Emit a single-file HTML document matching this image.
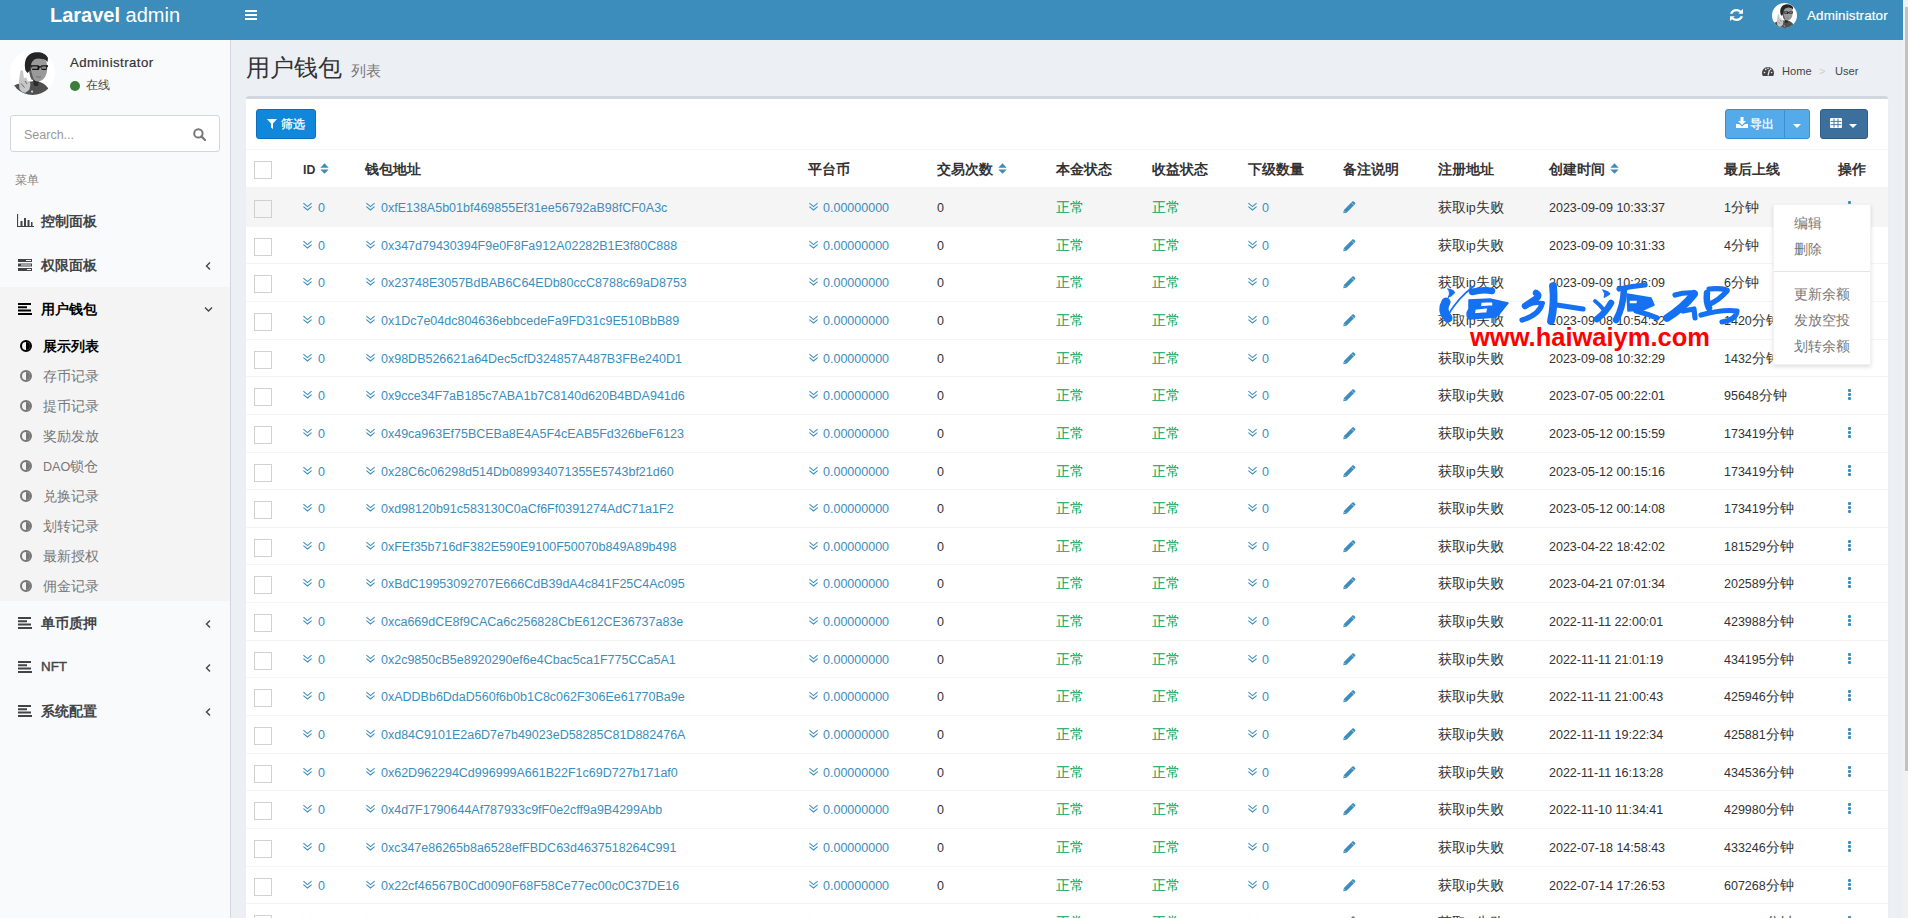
<!DOCTYPE html>
<html><head><meta charset="utf-8">
<style>
*{box-sizing:border-box;margin:0;padding:0}
html,body{width:1908px;height:918px;overflow:hidden;background:#ecf0f5;font-family:"Liberation Sans",sans-serif;color:#333}
.a{position:absolute;white-space:nowrap}
#hdr{position:absolute;left:0;top:0;width:1903px;height:40px;background:#3c8dbc}
#logo{position:absolute;left:50px;top:3px;color:#fff;font-size:20px;line-height:24px;white-space:nowrap}
#burger{position:absolute;left:245px;top:10px;width:12px;height:10px}
#burger i{display:block;height:2px;background:#fff;margin-bottom:2px}
#side{position:absolute;left:0;top:40px;width:230px;height:878px;background:#f9fafc}
#sideb{position:absolute;left:230px;top:40px;width:1px;height:878px;background:#d2d6de}
#sb{position:absolute;left:1903px;top:0;width:5px;height:918px;background:#f1f1f1}
#sbt{position:absolute;left:1905px;top:7px;width:3px;height:764px;background:#c1c1c1}
.zh{font-size:14px;line-height:14px}
#box{position:absolute;left:246px;top:96px;width:1642px;height:822px;background:#fff;border-top:3px solid #d2d6de;border-radius:3px 3px 0 0;box-shadow:0 1px 1px rgba(0,0,0,.1)}
.row{position:absolute;left:0;width:1642px;height:37.67px;border-top:1px solid #f4f4f4}
#rows .row:first-child,#rows .row:nth-child(2){border-top-color:transparent}
.row.hov{background:#f5f5f5}
.c{position:absolute;top:0;height:37px;line-height:38px;font-size:12.5px;white-space:nowrap;color:#333}
.lk{color:#3c8dbc}
.lk .chv{position:relative;top:-2px;margin-right:5px;vertical-align:middle}
.gr{color:#00a65a;font-size:14px;line-height:37px}
.cb{position:absolute;top:11px;width:18px;height:18px;border:1px solid #d0d0d0;background:#fff}
#rows .row:first-child .cb{background:#f5f5f5}
.pen{vertical-align:middle;position:relative;top:-1px}
.dots{top:12px;width:4px;height:12px}
.dots i{display:block;width:3px;height:3px;background:#3c8dbc;margin-bottom:1px;border-radius:1px}
.th{position:absolute;top:150px;height:38px;line-height:38px;font-size:14px;font-weight:bold;color:#333;white-space:nowrap}
.sort{display:inline-block;vertical-align:middle;position:relative;top:-2px;margin-left:5px}
/* sidebar */
.mi{position:absolute;left:18px;height:20px;line-height:20px;font-size:14px;font-weight:bold;color:#444;white-space:nowrap}
.mi .ic{position:absolute;left:0;top:4px}
.mi .tx{position:absolute;left:23px;top:0}
.arr{position:absolute;left:204px;width:8px;height:10px}
.sub{position:absolute;left:20px;height:20px;line-height:20px;font-size:14px;color:#777;white-space:nowrap}
.sub .hc{position:absolute;left:0;top:4px;width:12px;height:12px;border-radius:50%;border:2px solid #777;overflow:hidden}
.sub .hc:after{content:"";position:absolute;left:4px;top:0;width:6px;height:10px;background:#777}
.sub .tx{position:absolute;left:23px;top:0}
.sub.act{color:#000;font-weight:bold}
.sub.act .hc{border-color:#000}
.sub.act .hc:after{background:#000}
.btn{position:absolute;border-radius:3px;color:#fff;font-size:12px;white-space:nowrap}
#menu{position:absolute;left:1773px;top:204px;width:98px;height:161px;background:#fff;border:1px solid rgba(0,0,0,.05);box-shadow:0 2px 4px rgba(0,0,0,.13)}
#menu .it{position:absolute;left:19px;font-size:14px;line-height:16px;color:#777;white-space:nowrap}
#menu .dv{position:absolute;left:0;top:66px;width:96px;height:1px;background:#e5e5e5}
</style></head><body>
<div id="hdr">
 <div id="logo"><b>Laravel</b> admin</div>
 <div id="burger"><i></i><i></i><i></i></div>
 <svg class="a" style="left:1730px;top:9px" width="13" height="12" viewBox="0 0 13 12"><path d="M0 4.8C0.8 1.8 3.4 0 6.5 0C8.3 0 9.8 0.6 10.9 1.7L13 0V4.8H8.2L9.7 3.5C8.9 2.7 7.8 2.3 6.5 2.3C4.6 2.3 3 3.3 2.5 4.8Z" fill="#fff"/><path d="M13 7.2C12.2 10.2 9.6 12 6.5 12C4.7 12 3.2 11.4 2.1 10.3L0 12V7.2H4.8L3.3 8.5C4.1 9.3 5.2 9.7 6.5 9.7C8.4 9.7 10 8.7 10.5 7.2Z" fill="#fff"/></svg>
 <svg class="a" style="left:1772px;top:3px" width="25" height="25" viewBox="0 0 45 45"><defs><clipPath id="cp25"><circle cx="22.5" cy="22.5" r="22.5"/></clipPath></defs><g clip-path="url(#cp25)"><rect width="45" height="45" fill="#fff"/>
<path d="M3 36c4-2 9-3.5 14-4l8-1 5 1c3 1 6 3 8 6l2 7H3z" fill="#505050"/>
<path d="M22 40.5a1 1 0 1 0 0.1 0z" fill="#ddd"/>
<path d="M23 30h6l-1 6h-4z" fill="#2a2a2a"/>
<path d="M20 13C22 8 32 7 36 11C38 15 37.5 22 35.5 26C33.5 30 30.5 31.5 27.5 31.5C24 31 22 28 21 24Z" fill="#9a9a9a"/>
<path d="M20 15C21 20 22 26 24.5 30.5L21.5 29.5C19 25 18.5 19 20 15Z" fill="#5a5a5a"/>
<path d="M15 18C14 10 17 4 24 2.5C30 1.5 36 3 38 8L37.5 12C35.5 9 31 8.3 27 8.8C24 9.3 22 11 21.2 14L20.5 20L17.5 23C16 21.5 15 20 15 18Z" fill="#262626"/>
<path d="M20.5 15.2h8l1 1h1l1-1h6.5v1.6l-1 0.4-0.6 2.8h-4.6l-1-2.6h-1l-1 2.6h-6.5l-0.8-2.8z" fill="#151515"/>
<path d="M22 16.5h5.5v2.2H22zM31.5 16.5h4.6v2.2h-4.6z" fill="#8e8e8e"/>
<path d="M26 26.5c1.8 0.8 3.6 0.8 5 0" stroke="#6a6a6a" stroke-width="0.8" fill="none"/>
<path d="M10.5 21c1-1.2 2.4-0.6 2.6 0.8l0.9 7c0.6-1.6 2.2-1.8 2.8-0.6l0.6 2.6c2 0.2 3 2 3 4l-1 5-4 3c-3 0-5-2-6-4l-0.5-8z" fill="#c6c6c6"/>
<path d="M11 33.5l3.5 4M15 31l2 3" stroke="#6a6a6a" stroke-width="1"/>
</g></svg>
 <div class="a" style="left:1807px;top:7px;color:#fff;font-size:13.4px;line-height:18px;letter-spacing:0.15px;-webkit-text-stroke:0.2px #fff">Administrator</div>
</div>
<div id="side">
 <svg class="a" style="left:10px;top:10px" width="45" height="45" viewBox="0 0 45 45"><defs><clipPath id="cp45"><circle cx="22.5" cy="22.5" r="22.5"/></clipPath></defs><g clip-path="url(#cp45)"><rect width="45" height="45" fill="#fff"/>
<path d="M3 36c4-2 9-3.5 14-4l8-1 5 1c3 1 6 3 8 6l2 7H3z" fill="#505050"/>
<path d="M22 40.5a1 1 0 1 0 0.1 0z" fill="#ddd"/>
<path d="M23 30h6l-1 6h-4z" fill="#2a2a2a"/>
<path d="M20 13C22 8 32 7 36 11C38 15 37.5 22 35.5 26C33.5 30 30.5 31.5 27.5 31.5C24 31 22 28 21 24Z" fill="#9a9a9a"/>
<path d="M20 15C21 20 22 26 24.5 30.5L21.5 29.5C19 25 18.5 19 20 15Z" fill="#5a5a5a"/>
<path d="M15 18C14 10 17 4 24 2.5C30 1.5 36 3 38 8L37.5 12C35.5 9 31 8.3 27 8.8C24 9.3 22 11 21.2 14L20.5 20L17.5 23C16 21.5 15 20 15 18Z" fill="#262626"/>
<path d="M20.5 15.2h8l1 1h1l1-1h6.5v1.6l-1 0.4-0.6 2.8h-4.6l-1-2.6h-1l-1 2.6h-6.5l-0.8-2.8z" fill="#151515"/>
<path d="M22 16.5h5.5v2.2H22zM31.5 16.5h4.6v2.2h-4.6z" fill="#8e8e8e"/>
<path d="M26 26.5c1.8 0.8 3.6 0.8 5 0" stroke="#6a6a6a" stroke-width="0.8" fill="none"/>
<path d="M10.5 21c1-1.2 2.4-0.6 2.6 0.8l0.9 7c0.6-1.6 2.2-1.8 2.8-0.6l0.6 2.6c2 0.2 3 2 3 4l-1 5-4 3c-3 0-5-2-6-4l-0.5-8z" fill="#c6c6c6"/>
<path d="M11 33.5l3.5 4M15 31l2 3" stroke="#6a6a6a" stroke-width="1"/>
</g></svg>
 <div class="a" style="left:70px;top:15px;font-size:13.2px;line-height:16px;color:#333;letter-spacing:0.45px;-webkit-text-stroke:0.2px #333">Administrator</div>
 <div class="a" style="left:70px;top:41px;width:10px;height:10px;border-radius:50%;background:#3b7d3b"></div>
 <div class="a" style="left:86px;top:37px;font-size:12px;line-height:16px;color:#444">在线</div>
 <div class="a" style="left:10px;top:75px;width:210px;height:37px;background:#fff;border:1px solid #d2d6de;border-radius:3px"></div>
 <div class="a" style="left:24px;top:87px;font-size:12.5px;line-height:16px;color:#999">Search...</div>
 <svg class="a" style="left:193px;top:88px" width="13" height="13" viewBox="0 0 13 13"><circle cx="5.4" cy="5.4" r="4.2" fill="none" stroke="#777" stroke-width="2"/><path d="M8.4 8.4l3.6 3.6" stroke="#777" stroke-width="2.2" stroke-linecap="round"/></svg>
 <div class="a" style="left:15px;top:132px;font-size:12px;line-height:16px;color:#848484">菜单</div>
 <div class="a" style="left:0;top:247px;width:230px;height:314px;background:#f4f4f5"></div>
<div class="mi" style="top:171px"><svg class="ic" width="17" height="13" viewBox="0 0 17 13" style="top:3px;left:-1px"><path d="M0.5 0v12.5H17" fill="none" stroke="#444" stroke-width="1.2"/><path d="M3.5 7h2v5h-2zM7 4h2v8H7zM10.5 6h2v6h-2zM14 8h1.5v4H14z" fill="#444"/></svg><span class="tx">控制面板</span></div>
<div class="mi" style="top:215px"><svg class="ic" width="14" height="12" viewBox="0 0 14 12"><path d="M0 0h14v3H0zM0 4.5h14v3H0zM0 9h14v3H0z" fill="#444"/><path d="M8 1.5h5M3 6h10M9 10.5h4" stroke="#f9fafc" stroke-width="1"/></svg><span class="tx">权限面板</span></div><svg class="a" style="left:204px;top:221px" width="8" height="10" viewBox="0 0 8 10"><path d="M6 1.5L2.5 5 6 8.5" fill="none" stroke="#444" stroke-width="1.4"/></svg>
<div class="mi" style="top:259px;color:#000"><svg class="ic" width="14" height="12" viewBox="0 0 14 12"><path d="M0 1h13M0 4.3h9M0 7.6h13M0 10.9h14" stroke="#000" stroke-width="2"/></svg><span class="tx">用户钱包</span></div><svg class="a" style="left:204px;top:266px" width="9" height="7" viewBox="0 0 9 7"><path d="M1 1.5L4.5 5 8 1.5" fill="none" stroke="#444" stroke-width="1.4"/></svg>
<div class="sub act" style="top:296px"><span class="hc"></span><span class="tx">展示列表</span></div>
<div class="sub" style="top:326px"><span class="hc"></span><span class="tx">存币记录</span></div>
<div class="sub" style="top:356px"><span class="hc"></span><span class="tx">提币记录</span></div>
<div class="sub" style="top:386px"><span class="hc"></span><span class="tx">奖励发放</span></div>
<div class="sub" style="top:416px"><span class="hc"></span><span class="tx"><span style="font-size:12.6px">DAO</span>锁仓</span></div>
<div class="sub" style="top:446px"><span class="hc"></span><span class="tx">兑换记录</span></div>
<div class="sub" style="top:476px"><span class="hc"></span><span class="tx">划转记录</span></div>
<div class="sub" style="top:506px"><span class="hc"></span><span class="tx">最新授权</span></div>
<div class="sub" style="top:536px"><span class="hc"></span><span class="tx">佣金记录</span></div>
<div class="mi" style="top:573px"><svg class="ic" width="14" height="12" viewBox="0 0 14 12"><path d="M0 1h13M0 4.3h9M0 7.6h13M0 10.9h14" stroke="#444" stroke-width="2"/></svg><span class="tx">单币质押</span></div><svg class="a" style="left:204px;top:579px" width="8" height="10" viewBox="0 0 8 10"><path d="M6 1.5L2.5 5 6 8.5" fill="none" stroke="#444" stroke-width="1.4"/></svg>
<div class="mi" style="top:617px"><svg class="ic" width="14" height="12" viewBox="0 0 14 12"><path d="M0 1h13M0 4.3h9M0 7.6h13M0 10.9h14" stroke="#444" stroke-width="2"/></svg><span class="tx" style="font-weight:normal;font-size:13.4px;-webkit-text-stroke:0.4px #444">NFT</span></div><svg class="a" style="left:204px;top:623px" width="8" height="10" viewBox="0 0 8 10"><path d="M6 1.5L2.5 5 6 8.5" fill="none" stroke="#444" stroke-width="1.4"/></svg>
<div class="mi" style="top:661px"><svg class="ic" width="14" height="12" viewBox="0 0 14 12"><path d="M0 1h13M0 4.3h9M0 7.6h13M0 10.9h14" stroke="#444" stroke-width="2"/></svg><span class="tx">系统配置</span></div><svg class="a" style="left:204px;top:667px" width="8" height="10" viewBox="0 0 8 10"><path d="M6 1.5L2.5 5 6 8.5" fill="none" stroke="#444" stroke-width="1.4"/></svg>
</div>
<div id="sideb"></div>
<div class="a" style="left:246px;top:54px;font-size:24px;line-height:28px;color:#333">用户钱包</div>
<div class="a" style="left:351px;top:62px;font-size:15px;line-height:18px;color:#777">列表</div>
<svg class="a" style="left:1762px;top:66px" width="12" height="10" viewBox="0 0 12 10"><path d="M0.8 10A6 6 0 1 1 11.2 10z" fill="#444"/><circle cx="2.5" cy="6.5" r=".8" fill="#ecf0f5"/><circle cx="3.8" cy="3.4" r=".8" fill="#ecf0f5"/><circle cx="6" cy="2.3" r=".8" fill="#ecf0f5"/><circle cx="8.6" cy="3.4" r=".8" fill="#ecf0f5"/><circle cx="9.6" cy="6.5" r=".8" fill="#ecf0f5"/><path d="M6 9.5L7.4 3.8" stroke="#ecf0f5" stroke-width="1.2"/></svg>
<div class="a" style="left:1782px;top:64px;font-size:11.1px;line-height:14px;color:#444">Home</div>
<div class="a" style="left:1819px;top:64px;font-size:11px;line-height:14px;color:#ccc">&gt;</div>
<div class="a" style="left:1835px;top:64px;font-size:11.1px;line-height:14px;color:#444">User</div>
<div id="box"></div>
<div class="a" style="left:246px;top:149px;width:1642px;height:1px;background:#f4f4f4"></div>
<div class="btn" style="left:256px;top:109px;width:60px;height:30px;background:#1187dc;border:1px solid #0a6fbf"></div>
<svg class="a" style="left:267px;top:119px" width="10" height="10" viewBox="0 0 10 10"><path d="M0 0h10L6 4.5V10L4 8.5V4.5z" fill="#fff"/></svg>
<div class="a" style="left:281px;top:115.5px;font-size:12px;line-height:16px;color:#fff;-webkit-text-stroke:0.3px #fff">筛选</div>
<div class="btn" style="left:1725px;top:109px;width:85px;height:30px;background:#55aaea;border:1px solid #3a8fd2"></div>
<div class="a" style="left:1784px;top:110px;width:1px;height:28px;background:#3a8fd2"></div>
<svg class="a" style="left:1736px;top:117px" width="12" height="11" viewBox="0 0 12 11"><path d="M4.5 0h3v4h2.5L6 8 2 4h2.5z" fill="#fff"/><path d="M0 7h3l3 2.5 3-2.5h3v4H0z" fill="#fff"/></svg>
<div class="a" style="left:1749.5px;top:115.5px;font-size:12px;line-height:16px;color:#fff;-webkit-text-stroke:0.3px #fff">导出</div>
<svg class="a" style="left:1793px;top:124px" width="8" height="4" viewBox="0 0 8 4"><path d="M0 0h8L4 4z" fill="#fff"/></svg>
<div class="btn" style="left:1820px;top:109px;width:48px;height:30px;background:#3d6f9c;border:1px solid #305b84"></div>
<svg class="a" style="left:1830px;top:118px" width="12" height="10" viewBox="0 0 12 10"><rect x="0" y="0" width="12" height="10" rx="1" fill="#fff"/><path d="M0.5 3.4h11M0.5 6.6h11M4 0.5v9M8 0.5v9" stroke="#3d6f9c" stroke-width="0.9"/></svg>
<svg class="a" style="left:1849px;top:124px" width="8" height="4" viewBox="0 0 8 4"><path d="M0 0h8L4 4z" fill="#fff"/></svg>
<div class="cb" style="left:254px;top:161px"></div>
<div class="th" style="left:303px"><span style="font-size:12.3px">ID</span><svg class="sort" width="9" height="11" viewBox="0 0 9 11"><path d="M0.3 4.7L4.5 0.3 8.7 4.7z" fill="#3c8dbc"/><path d="M0.3 6.4L4.5 10.8 8.7 6.4z" fill="#3c8dbc"/></svg></div>
<div class="th" style="left:365px">钱包地址</div>
<div class="th" style="left:808px">平台币</div>
<div class="th" style="left:937px">交易次数<svg class="sort" width="9" height="11" viewBox="0 0 9 11"><path d="M0.3 4.7L4.5 0.3 8.7 4.7z" fill="#3c8dbc"/><path d="M0.3 6.4L4.5 10.8 8.7 6.4z" fill="#3c8dbc"/></svg></div>
<div class="th" style="left:1056px">本金状态</div>
<div class="th" style="left:1152px">收益状态</div>
<div class="th" style="left:1248px">下级数量</div>
<div class="th" style="left:1343px">备注说明</div>
<div class="th" style="left:1438px">注册地址</div>
<div class="th" style="left:1549px">创建时间<svg class="sort" width="9" height="11" viewBox="0 0 9 11"><path d="M0.3 4.7L4.5 0.3 8.7 4.7z" fill="#3c8dbc"/><path d="M0.3 6.4L4.5 10.8 8.7 6.4z" fill="#3c8dbc"/></svg></div>
<div class="th" style="left:1724px">最后上线</div>
<div class="th" style="left:1838px">操作</div>
<div class="a" style="left:246px;top:187px;width:1642px;height:39.6px;background:#f5f5f5"></div>
<div id="rows" style="position:absolute;left:246px;top:0">
<div class="row" style="top:188px;height:38px">
<div class="cb" style="left:8px"></div>
<div class="c lk" style="left:57px"><svg class="chv" width="9" height="9" viewBox="0 0 9 9"><path d="M0.4 1.2L4.5 4.6 8.6 1.2M0.4 4.6L4.5 8 8.6 4.6" fill="none" stroke="#3c8dbc" stroke-width="1.05"/></svg><span class="t" style="margin-left:1px">0</span></div>
<div class="c lk" style="left:120px"><svg class="chv" width="9" height="9" viewBox="0 0 9 9"><path d="M0.4 1.2L4.5 4.6 8.6 1.2M0.4 4.6L4.5 8 8.6 4.6" fill="none" stroke="#3c8dbc" stroke-width="1.05"/></svg><span class="t" style="margin-left:1px">0xfE138A5b01bf469855Ef31ee56792aB98fCF0A3c</span></div>
<div class="c lk" style="left:563px"><svg class="chv" width="9" height="9" viewBox="0 0 9 9"><path d="M0.4 1.2L4.5 4.6 8.6 1.2M0.4 4.6L4.5 8 8.6 4.6" fill="none" stroke="#3c8dbc" stroke-width="1.05"/></svg><span class="t">0.00000000</span></div>
<div class="c" style="left:691px">0</div>
<div class="c gr" style="left:810px">正常</div>
<div class="c gr" style="left:906px">正常</div>
<div class="c lk" style="left:1002px"><svg class="chv" width="9" height="9" viewBox="0 0 9 9"><path d="M0.4 1.2L4.5 4.6 8.6 1.2M0.4 4.6L4.5 8 8.6 4.6" fill="none" stroke="#3c8dbc" stroke-width="1.05"/></svg><span class="t">0</span></div>
<div class="c" style="left:1097px"><svg class="pen" width="12.5" height="12.5" viewBox="0 0 13 13"><path d="M0.3 12.7L0.9 9.3L9.7 0.5Q10.5-0.2 11.3 0.5L12.5 1.7Q13.2 2.5 12.5 3.3L3.7 12.1Z" fill="#3c8dbc"/><path d="M8.6 1.6L11.4 4.4M1.2 10.2L2.8 11.8" stroke="#f5f5f5" stroke-width="0.6"/></svg></div>
<div class="c" style="left:1192px"><span class="zh">获取</span>ip<span class="zh">失败</span></div>
<div class="c" style="left:1303px">2023-09-09 10:33:37</div>
<div class="c" style="left:1478px">1<span class="zh">分钟</span></div>
<div class="c dots" style="left:1602px"><i></i><i></i><i></i></div>
</div>
<div class="row" style="top:226px;height:37px">
<div class="cb" style="left:8px"></div>
<div class="c lk" style="left:57px"><svg class="chv" width="9" height="9" viewBox="0 0 9 9"><path d="M0.4 1.2L4.5 4.6 8.6 1.2M0.4 4.6L4.5 8 8.6 4.6" fill="none" stroke="#3c8dbc" stroke-width="1.05"/></svg><span class="t" style="margin-left:1px">0</span></div>
<div class="c lk" style="left:120px"><svg class="chv" width="9" height="9" viewBox="0 0 9 9"><path d="M0.4 1.2L4.5 4.6 8.6 1.2M0.4 4.6L4.5 8 8.6 4.6" fill="none" stroke="#3c8dbc" stroke-width="1.05"/></svg><span class="t" style="margin-left:1px">0x347d79430394F9e0F8Fa912A02282B1E3f80C888</span></div>
<div class="c lk" style="left:563px"><svg class="chv" width="9" height="9" viewBox="0 0 9 9"><path d="M0.4 1.2L4.5 4.6 8.6 1.2M0.4 4.6L4.5 8 8.6 4.6" fill="none" stroke="#3c8dbc" stroke-width="1.05"/></svg><span class="t">0.00000000</span></div>
<div class="c" style="left:691px">0</div>
<div class="c gr" style="left:810px">正常</div>
<div class="c gr" style="left:906px">正常</div>
<div class="c lk" style="left:1002px"><svg class="chv" width="9" height="9" viewBox="0 0 9 9"><path d="M0.4 1.2L4.5 4.6 8.6 1.2M0.4 4.6L4.5 8 8.6 4.6" fill="none" stroke="#3c8dbc" stroke-width="1.05"/></svg><span class="t">0</span></div>
<div class="c" style="left:1097px"><svg class="pen" width="12.5" height="12.5" viewBox="0 0 13 13"><path d="M0.3 12.7L0.9 9.3L9.7 0.5Q10.5-0.2 11.3 0.5L12.5 1.7Q13.2 2.5 12.5 3.3L3.7 12.1Z" fill="#3c8dbc"/><path d="M8.6 1.6L11.4 4.4M1.2 10.2L2.8 11.8" stroke="#f5f5f5" stroke-width="0.6"/></svg></div>
<div class="c" style="left:1192px"><span class="zh">获取</span>ip<span class="zh">失败</span></div>
<div class="c" style="left:1303px">2023-09-09 10:31:33</div>
<div class="c" style="left:1478px">4<span class="zh">分钟</span></div>
<div class="c dots" style="left:1602px"><i></i><i></i><i></i></div>
</div>
<div class="row" style="top:263px;height:38px">
<div class="cb" style="left:8px"></div>
<div class="c lk" style="left:57px"><svg class="chv" width="9" height="9" viewBox="0 0 9 9"><path d="M0.4 1.2L4.5 4.6 8.6 1.2M0.4 4.6L4.5 8 8.6 4.6" fill="none" stroke="#3c8dbc" stroke-width="1.05"/></svg><span class="t" style="margin-left:1px">0</span></div>
<div class="c lk" style="left:120px"><svg class="chv" width="9" height="9" viewBox="0 0 9 9"><path d="M0.4 1.2L4.5 4.6 8.6 1.2M0.4 4.6L4.5 8 8.6 4.6" fill="none" stroke="#3c8dbc" stroke-width="1.05"/></svg><span class="t" style="margin-left:1px">0x23748E3057BdBAB6C64EDb80ccC8788c69aD8753</span></div>
<div class="c lk" style="left:563px"><svg class="chv" width="9" height="9" viewBox="0 0 9 9"><path d="M0.4 1.2L4.5 4.6 8.6 1.2M0.4 4.6L4.5 8 8.6 4.6" fill="none" stroke="#3c8dbc" stroke-width="1.05"/></svg><span class="t">0.00000000</span></div>
<div class="c" style="left:691px">0</div>
<div class="c gr" style="left:810px">正常</div>
<div class="c gr" style="left:906px">正常</div>
<div class="c lk" style="left:1002px"><svg class="chv" width="9" height="9" viewBox="0 0 9 9"><path d="M0.4 1.2L4.5 4.6 8.6 1.2M0.4 4.6L4.5 8 8.6 4.6" fill="none" stroke="#3c8dbc" stroke-width="1.05"/></svg><span class="t">0</span></div>
<div class="c" style="left:1097px"><svg class="pen" width="12.5" height="12.5" viewBox="0 0 13 13"><path d="M0.3 12.7L0.9 9.3L9.7 0.5Q10.5-0.2 11.3 0.5L12.5 1.7Q13.2 2.5 12.5 3.3L3.7 12.1Z" fill="#3c8dbc"/><path d="M8.6 1.6L11.4 4.4M1.2 10.2L2.8 11.8" stroke="#f5f5f5" stroke-width="0.6"/></svg></div>
<div class="c" style="left:1192px"><span class="zh">获取</span>ip<span class="zh">失败</span></div>
<div class="c" style="left:1303px">2023-09-09 10:26:09</div>
<div class="c" style="left:1478px">6<span class="zh">分钟</span></div>
<div class="c dots" style="left:1602px"><i></i><i></i><i></i></div>
</div>
<div class="row" style="top:301px;height:38px">
<div class="cb" style="left:8px"></div>
<div class="c lk" style="left:57px"><svg class="chv" width="9" height="9" viewBox="0 0 9 9"><path d="M0.4 1.2L4.5 4.6 8.6 1.2M0.4 4.6L4.5 8 8.6 4.6" fill="none" stroke="#3c8dbc" stroke-width="1.05"/></svg><span class="t" style="margin-left:1px">0</span></div>
<div class="c lk" style="left:120px"><svg class="chv" width="9" height="9" viewBox="0 0 9 9"><path d="M0.4 1.2L4.5 4.6 8.6 1.2M0.4 4.6L4.5 8 8.6 4.6" fill="none" stroke="#3c8dbc" stroke-width="1.05"/></svg><span class="t" style="margin-left:1px">0x1Dc7e04dc804636ebbcedeFa9FD31c9E510BbB89</span></div>
<div class="c lk" style="left:563px"><svg class="chv" width="9" height="9" viewBox="0 0 9 9"><path d="M0.4 1.2L4.5 4.6 8.6 1.2M0.4 4.6L4.5 8 8.6 4.6" fill="none" stroke="#3c8dbc" stroke-width="1.05"/></svg><span class="t">0.00000000</span></div>
<div class="c" style="left:691px">0</div>
<div class="c gr" style="left:810px">正常</div>
<div class="c gr" style="left:906px">正常</div>
<div class="c lk" style="left:1002px"><svg class="chv" width="9" height="9" viewBox="0 0 9 9"><path d="M0.4 1.2L4.5 4.6 8.6 1.2M0.4 4.6L4.5 8 8.6 4.6" fill="none" stroke="#3c8dbc" stroke-width="1.05"/></svg><span class="t">0</span></div>
<div class="c" style="left:1097px"><svg class="pen" width="12.5" height="12.5" viewBox="0 0 13 13"><path d="M0.3 12.7L0.9 9.3L9.7 0.5Q10.5-0.2 11.3 0.5L12.5 1.7Q13.2 2.5 12.5 3.3L3.7 12.1Z" fill="#3c8dbc"/><path d="M8.6 1.6L11.4 4.4M1.2 10.2L2.8 11.8" stroke="#f5f5f5" stroke-width="0.6"/></svg></div>
<div class="c" style="left:1192px"><span class="zh">获取</span>ip<span class="zh">失败</span></div>
<div class="c" style="left:1303px">2023-09-08 10:54:32</div>
<div class="c" style="left:1478px">1420<span class="zh">分钟</span></div>
<div class="c dots" style="left:1602px"><i></i><i></i><i></i></div>
</div>
<div class="row" style="top:339px;height:37px">
<div class="cb" style="left:8px"></div>
<div class="c lk" style="left:57px"><svg class="chv" width="9" height="9" viewBox="0 0 9 9"><path d="M0.4 1.2L4.5 4.6 8.6 1.2M0.4 4.6L4.5 8 8.6 4.6" fill="none" stroke="#3c8dbc" stroke-width="1.05"/></svg><span class="t" style="margin-left:1px">0</span></div>
<div class="c lk" style="left:120px"><svg class="chv" width="9" height="9" viewBox="0 0 9 9"><path d="M0.4 1.2L4.5 4.6 8.6 1.2M0.4 4.6L4.5 8 8.6 4.6" fill="none" stroke="#3c8dbc" stroke-width="1.05"/></svg><span class="t" style="margin-left:1px">0x98DB526621a64Dec5cfD324857A487B3FBe240D1</span></div>
<div class="c lk" style="left:563px"><svg class="chv" width="9" height="9" viewBox="0 0 9 9"><path d="M0.4 1.2L4.5 4.6 8.6 1.2M0.4 4.6L4.5 8 8.6 4.6" fill="none" stroke="#3c8dbc" stroke-width="1.05"/></svg><span class="t">0.00000000</span></div>
<div class="c" style="left:691px">0</div>
<div class="c gr" style="left:810px">正常</div>
<div class="c gr" style="left:906px">正常</div>
<div class="c lk" style="left:1002px"><svg class="chv" width="9" height="9" viewBox="0 0 9 9"><path d="M0.4 1.2L4.5 4.6 8.6 1.2M0.4 4.6L4.5 8 8.6 4.6" fill="none" stroke="#3c8dbc" stroke-width="1.05"/></svg><span class="t">0</span></div>
<div class="c" style="left:1097px"><svg class="pen" width="12.5" height="12.5" viewBox="0 0 13 13"><path d="M0.3 12.7L0.9 9.3L9.7 0.5Q10.5-0.2 11.3 0.5L12.5 1.7Q13.2 2.5 12.5 3.3L3.7 12.1Z" fill="#3c8dbc"/><path d="M8.6 1.6L11.4 4.4M1.2 10.2L2.8 11.8" stroke="#f5f5f5" stroke-width="0.6"/></svg></div>
<div class="c" style="left:1192px"><span class="zh">获取</span>ip<span class="zh">失败</span></div>
<div class="c" style="left:1303px">2023-09-08 10:32:29</div>
<div class="c" style="left:1478px">1432<span class="zh">分钟</span></div>
<div class="c dots" style="left:1602px"><i></i><i></i><i></i></div>
</div>
<div class="row" style="top:376px;height:38px">
<div class="cb" style="left:8px"></div>
<div class="c lk" style="left:57px"><svg class="chv" width="9" height="9" viewBox="0 0 9 9"><path d="M0.4 1.2L4.5 4.6 8.6 1.2M0.4 4.6L4.5 8 8.6 4.6" fill="none" stroke="#3c8dbc" stroke-width="1.05"/></svg><span class="t" style="margin-left:1px">0</span></div>
<div class="c lk" style="left:120px"><svg class="chv" width="9" height="9" viewBox="0 0 9 9"><path d="M0.4 1.2L4.5 4.6 8.6 1.2M0.4 4.6L4.5 8 8.6 4.6" fill="none" stroke="#3c8dbc" stroke-width="1.05"/></svg><span class="t" style="margin-left:1px">0x9cce34F7aB185c7ABA1b7C8140d620B4BDA941d6</span></div>
<div class="c lk" style="left:563px"><svg class="chv" width="9" height="9" viewBox="0 0 9 9"><path d="M0.4 1.2L4.5 4.6 8.6 1.2M0.4 4.6L4.5 8 8.6 4.6" fill="none" stroke="#3c8dbc" stroke-width="1.05"/></svg><span class="t">0.00000000</span></div>
<div class="c" style="left:691px">0</div>
<div class="c gr" style="left:810px">正常</div>
<div class="c gr" style="left:906px">正常</div>
<div class="c lk" style="left:1002px"><svg class="chv" width="9" height="9" viewBox="0 0 9 9"><path d="M0.4 1.2L4.5 4.6 8.6 1.2M0.4 4.6L4.5 8 8.6 4.6" fill="none" stroke="#3c8dbc" stroke-width="1.05"/></svg><span class="t">0</span></div>
<div class="c" style="left:1097px"><svg class="pen" width="12.5" height="12.5" viewBox="0 0 13 13"><path d="M0.3 12.7L0.9 9.3L9.7 0.5Q10.5-0.2 11.3 0.5L12.5 1.7Q13.2 2.5 12.5 3.3L3.7 12.1Z" fill="#3c8dbc"/><path d="M8.6 1.6L11.4 4.4M1.2 10.2L2.8 11.8" stroke="#f5f5f5" stroke-width="0.6"/></svg></div>
<div class="c" style="left:1192px"><span class="zh">获取</span>ip<span class="zh">失败</span></div>
<div class="c" style="left:1303px">2023-07-05 00:22:01</div>
<div class="c" style="left:1478px">95648<span class="zh">分钟</span></div>
<div class="c dots" style="left:1602px"><i></i><i></i><i></i></div>
</div>
<div class="row" style="top:414px;height:38px">
<div class="cb" style="left:8px"></div>
<div class="c lk" style="left:57px"><svg class="chv" width="9" height="9" viewBox="0 0 9 9"><path d="M0.4 1.2L4.5 4.6 8.6 1.2M0.4 4.6L4.5 8 8.6 4.6" fill="none" stroke="#3c8dbc" stroke-width="1.05"/></svg><span class="t" style="margin-left:1px">0</span></div>
<div class="c lk" style="left:120px"><svg class="chv" width="9" height="9" viewBox="0 0 9 9"><path d="M0.4 1.2L4.5 4.6 8.6 1.2M0.4 4.6L4.5 8 8.6 4.6" fill="none" stroke="#3c8dbc" stroke-width="1.05"/></svg><span class="t" style="margin-left:1px">0x49ca963Ef75BCEBa8E4A5F4cEAB5Fd326beF6123</span></div>
<div class="c lk" style="left:563px"><svg class="chv" width="9" height="9" viewBox="0 0 9 9"><path d="M0.4 1.2L4.5 4.6 8.6 1.2M0.4 4.6L4.5 8 8.6 4.6" fill="none" stroke="#3c8dbc" stroke-width="1.05"/></svg><span class="t">0.00000000</span></div>
<div class="c" style="left:691px">0</div>
<div class="c gr" style="left:810px">正常</div>
<div class="c gr" style="left:906px">正常</div>
<div class="c lk" style="left:1002px"><svg class="chv" width="9" height="9" viewBox="0 0 9 9"><path d="M0.4 1.2L4.5 4.6 8.6 1.2M0.4 4.6L4.5 8 8.6 4.6" fill="none" stroke="#3c8dbc" stroke-width="1.05"/></svg><span class="t">0</span></div>
<div class="c" style="left:1097px"><svg class="pen" width="12.5" height="12.5" viewBox="0 0 13 13"><path d="M0.3 12.7L0.9 9.3L9.7 0.5Q10.5-0.2 11.3 0.5L12.5 1.7Q13.2 2.5 12.5 3.3L3.7 12.1Z" fill="#3c8dbc"/><path d="M8.6 1.6L11.4 4.4M1.2 10.2L2.8 11.8" stroke="#f5f5f5" stroke-width="0.6"/></svg></div>
<div class="c" style="left:1192px"><span class="zh">获取</span>ip<span class="zh">失败</span></div>
<div class="c" style="left:1303px">2023-05-12 00:15:59</div>
<div class="c" style="left:1478px">173419<span class="zh">分钟</span></div>
<div class="c dots" style="left:1602px"><i></i><i></i><i></i></div>
</div>
<div class="row" style="top:452px;height:37px">
<div class="cb" style="left:8px"></div>
<div class="c lk" style="left:57px"><svg class="chv" width="9" height="9" viewBox="0 0 9 9"><path d="M0.4 1.2L4.5 4.6 8.6 1.2M0.4 4.6L4.5 8 8.6 4.6" fill="none" stroke="#3c8dbc" stroke-width="1.05"/></svg><span class="t" style="margin-left:1px">0</span></div>
<div class="c lk" style="left:120px"><svg class="chv" width="9" height="9" viewBox="0 0 9 9"><path d="M0.4 1.2L4.5 4.6 8.6 1.2M0.4 4.6L4.5 8 8.6 4.6" fill="none" stroke="#3c8dbc" stroke-width="1.05"/></svg><span class="t" style="margin-left:1px">0x28C6c06298d514Db089934071355E5743bf21d60</span></div>
<div class="c lk" style="left:563px"><svg class="chv" width="9" height="9" viewBox="0 0 9 9"><path d="M0.4 1.2L4.5 4.6 8.6 1.2M0.4 4.6L4.5 8 8.6 4.6" fill="none" stroke="#3c8dbc" stroke-width="1.05"/></svg><span class="t">0.00000000</span></div>
<div class="c" style="left:691px">0</div>
<div class="c gr" style="left:810px">正常</div>
<div class="c gr" style="left:906px">正常</div>
<div class="c lk" style="left:1002px"><svg class="chv" width="9" height="9" viewBox="0 0 9 9"><path d="M0.4 1.2L4.5 4.6 8.6 1.2M0.4 4.6L4.5 8 8.6 4.6" fill="none" stroke="#3c8dbc" stroke-width="1.05"/></svg><span class="t">0</span></div>
<div class="c" style="left:1097px"><svg class="pen" width="12.5" height="12.5" viewBox="0 0 13 13"><path d="M0.3 12.7L0.9 9.3L9.7 0.5Q10.5-0.2 11.3 0.5L12.5 1.7Q13.2 2.5 12.5 3.3L3.7 12.1Z" fill="#3c8dbc"/><path d="M8.6 1.6L11.4 4.4M1.2 10.2L2.8 11.8" stroke="#f5f5f5" stroke-width="0.6"/></svg></div>
<div class="c" style="left:1192px"><span class="zh">获取</span>ip<span class="zh">失败</span></div>
<div class="c" style="left:1303px">2023-05-12 00:15:16</div>
<div class="c" style="left:1478px">173419<span class="zh">分钟</span></div>
<div class="c dots" style="left:1602px"><i></i><i></i><i></i></div>
</div>
<div class="row" style="top:489px;height:38px">
<div class="cb" style="left:8px"></div>
<div class="c lk" style="left:57px"><svg class="chv" width="9" height="9" viewBox="0 0 9 9"><path d="M0.4 1.2L4.5 4.6 8.6 1.2M0.4 4.6L4.5 8 8.6 4.6" fill="none" stroke="#3c8dbc" stroke-width="1.05"/></svg><span class="t" style="margin-left:1px">0</span></div>
<div class="c lk" style="left:120px"><svg class="chv" width="9" height="9" viewBox="0 0 9 9"><path d="M0.4 1.2L4.5 4.6 8.6 1.2M0.4 4.6L4.5 8 8.6 4.6" fill="none" stroke="#3c8dbc" stroke-width="1.05"/></svg><span class="t" style="margin-left:1px">0xd98120b91c583130C0aCf6Ff0391274AdC71a1F2</span></div>
<div class="c lk" style="left:563px"><svg class="chv" width="9" height="9" viewBox="0 0 9 9"><path d="M0.4 1.2L4.5 4.6 8.6 1.2M0.4 4.6L4.5 8 8.6 4.6" fill="none" stroke="#3c8dbc" stroke-width="1.05"/></svg><span class="t">0.00000000</span></div>
<div class="c" style="left:691px">0</div>
<div class="c gr" style="left:810px">正常</div>
<div class="c gr" style="left:906px">正常</div>
<div class="c lk" style="left:1002px"><svg class="chv" width="9" height="9" viewBox="0 0 9 9"><path d="M0.4 1.2L4.5 4.6 8.6 1.2M0.4 4.6L4.5 8 8.6 4.6" fill="none" stroke="#3c8dbc" stroke-width="1.05"/></svg><span class="t">0</span></div>
<div class="c" style="left:1097px"><svg class="pen" width="12.5" height="12.5" viewBox="0 0 13 13"><path d="M0.3 12.7L0.9 9.3L9.7 0.5Q10.5-0.2 11.3 0.5L12.5 1.7Q13.2 2.5 12.5 3.3L3.7 12.1Z" fill="#3c8dbc"/><path d="M8.6 1.6L11.4 4.4M1.2 10.2L2.8 11.8" stroke="#f5f5f5" stroke-width="0.6"/></svg></div>
<div class="c" style="left:1192px"><span class="zh">获取</span>ip<span class="zh">失败</span></div>
<div class="c" style="left:1303px">2023-05-12 00:14:08</div>
<div class="c" style="left:1478px">173419<span class="zh">分钟</span></div>
<div class="c dots" style="left:1602px"><i></i><i></i><i></i></div>
</div>
<div class="row" style="top:527px;height:37px">
<div class="cb" style="left:8px"></div>
<div class="c lk" style="left:57px"><svg class="chv" width="9" height="9" viewBox="0 0 9 9"><path d="M0.4 1.2L4.5 4.6 8.6 1.2M0.4 4.6L4.5 8 8.6 4.6" fill="none" stroke="#3c8dbc" stroke-width="1.05"/></svg><span class="t" style="margin-left:1px">0</span></div>
<div class="c lk" style="left:120px"><svg class="chv" width="9" height="9" viewBox="0 0 9 9"><path d="M0.4 1.2L4.5 4.6 8.6 1.2M0.4 4.6L4.5 8 8.6 4.6" fill="none" stroke="#3c8dbc" stroke-width="1.05"/></svg><span class="t" style="margin-left:1px">0xFEf35b716dF382E590E9100F50070b849A89b498</span></div>
<div class="c lk" style="left:563px"><svg class="chv" width="9" height="9" viewBox="0 0 9 9"><path d="M0.4 1.2L4.5 4.6 8.6 1.2M0.4 4.6L4.5 8 8.6 4.6" fill="none" stroke="#3c8dbc" stroke-width="1.05"/></svg><span class="t">0.00000000</span></div>
<div class="c" style="left:691px">0</div>
<div class="c gr" style="left:810px">正常</div>
<div class="c gr" style="left:906px">正常</div>
<div class="c lk" style="left:1002px"><svg class="chv" width="9" height="9" viewBox="0 0 9 9"><path d="M0.4 1.2L4.5 4.6 8.6 1.2M0.4 4.6L4.5 8 8.6 4.6" fill="none" stroke="#3c8dbc" stroke-width="1.05"/></svg><span class="t">0</span></div>
<div class="c" style="left:1097px"><svg class="pen" width="12.5" height="12.5" viewBox="0 0 13 13"><path d="M0.3 12.7L0.9 9.3L9.7 0.5Q10.5-0.2 11.3 0.5L12.5 1.7Q13.2 2.5 12.5 3.3L3.7 12.1Z" fill="#3c8dbc"/><path d="M8.6 1.6L11.4 4.4M1.2 10.2L2.8 11.8" stroke="#f5f5f5" stroke-width="0.6"/></svg></div>
<div class="c" style="left:1192px"><span class="zh">获取</span>ip<span class="zh">失败</span></div>
<div class="c" style="left:1303px">2023-04-22 18:42:02</div>
<div class="c" style="left:1478px">181529<span class="zh">分钟</span></div>
<div class="c dots" style="left:1602px"><i></i><i></i><i></i></div>
</div>
<div class="row" style="top:564px;height:38px">
<div class="cb" style="left:8px"></div>
<div class="c lk" style="left:57px"><svg class="chv" width="9" height="9" viewBox="0 0 9 9"><path d="M0.4 1.2L4.5 4.6 8.6 1.2M0.4 4.6L4.5 8 8.6 4.6" fill="none" stroke="#3c8dbc" stroke-width="1.05"/></svg><span class="t" style="margin-left:1px">0</span></div>
<div class="c lk" style="left:120px"><svg class="chv" width="9" height="9" viewBox="0 0 9 9"><path d="M0.4 1.2L4.5 4.6 8.6 1.2M0.4 4.6L4.5 8 8.6 4.6" fill="none" stroke="#3c8dbc" stroke-width="1.05"/></svg><span class="t" style="margin-left:1px">0xBdC19953092707E666CdB39dA4c841F25C4Ac095</span></div>
<div class="c lk" style="left:563px"><svg class="chv" width="9" height="9" viewBox="0 0 9 9"><path d="M0.4 1.2L4.5 4.6 8.6 1.2M0.4 4.6L4.5 8 8.6 4.6" fill="none" stroke="#3c8dbc" stroke-width="1.05"/></svg><span class="t">0.00000000</span></div>
<div class="c" style="left:691px">0</div>
<div class="c gr" style="left:810px">正常</div>
<div class="c gr" style="left:906px">正常</div>
<div class="c lk" style="left:1002px"><svg class="chv" width="9" height="9" viewBox="0 0 9 9"><path d="M0.4 1.2L4.5 4.6 8.6 1.2M0.4 4.6L4.5 8 8.6 4.6" fill="none" stroke="#3c8dbc" stroke-width="1.05"/></svg><span class="t">0</span></div>
<div class="c" style="left:1097px"><svg class="pen" width="12.5" height="12.5" viewBox="0 0 13 13"><path d="M0.3 12.7L0.9 9.3L9.7 0.5Q10.5-0.2 11.3 0.5L12.5 1.7Q13.2 2.5 12.5 3.3L3.7 12.1Z" fill="#3c8dbc"/><path d="M8.6 1.6L11.4 4.4M1.2 10.2L2.8 11.8" stroke="#f5f5f5" stroke-width="0.6"/></svg></div>
<div class="c" style="left:1192px"><span class="zh">获取</span>ip<span class="zh">失败</span></div>
<div class="c" style="left:1303px">2023-04-21 07:01:34</div>
<div class="c" style="left:1478px">202589<span class="zh">分钟</span></div>
<div class="c dots" style="left:1602px"><i></i><i></i><i></i></div>
</div>
<div class="row" style="top:602px;height:38px">
<div class="cb" style="left:8px"></div>
<div class="c lk" style="left:57px"><svg class="chv" width="9" height="9" viewBox="0 0 9 9"><path d="M0.4 1.2L4.5 4.6 8.6 1.2M0.4 4.6L4.5 8 8.6 4.6" fill="none" stroke="#3c8dbc" stroke-width="1.05"/></svg><span class="t" style="margin-left:1px">0</span></div>
<div class="c lk" style="left:120px"><svg class="chv" width="9" height="9" viewBox="0 0 9 9"><path d="M0.4 1.2L4.5 4.6 8.6 1.2M0.4 4.6L4.5 8 8.6 4.6" fill="none" stroke="#3c8dbc" stroke-width="1.05"/></svg><span class="t" style="margin-left:1px">0xca669dCE8f9CACa6c256828CbE612CE36737a83e</span></div>
<div class="c lk" style="left:563px"><svg class="chv" width="9" height="9" viewBox="0 0 9 9"><path d="M0.4 1.2L4.5 4.6 8.6 1.2M0.4 4.6L4.5 8 8.6 4.6" fill="none" stroke="#3c8dbc" stroke-width="1.05"/></svg><span class="t">0.00000000</span></div>
<div class="c" style="left:691px">0</div>
<div class="c gr" style="left:810px">正常</div>
<div class="c gr" style="left:906px">正常</div>
<div class="c lk" style="left:1002px"><svg class="chv" width="9" height="9" viewBox="0 0 9 9"><path d="M0.4 1.2L4.5 4.6 8.6 1.2M0.4 4.6L4.5 8 8.6 4.6" fill="none" stroke="#3c8dbc" stroke-width="1.05"/></svg><span class="t">0</span></div>
<div class="c" style="left:1097px"><svg class="pen" width="12.5" height="12.5" viewBox="0 0 13 13"><path d="M0.3 12.7L0.9 9.3L9.7 0.5Q10.5-0.2 11.3 0.5L12.5 1.7Q13.2 2.5 12.5 3.3L3.7 12.1Z" fill="#3c8dbc"/><path d="M8.6 1.6L11.4 4.4M1.2 10.2L2.8 11.8" stroke="#f5f5f5" stroke-width="0.6"/></svg></div>
<div class="c" style="left:1192px"><span class="zh">获取</span>ip<span class="zh">失败</span></div>
<div class="c" style="left:1303px">2022-11-11 22:00:01</div>
<div class="c" style="left:1478px">423988<span class="zh">分钟</span></div>
<div class="c dots" style="left:1602px"><i></i><i></i><i></i></div>
</div>
<div class="row" style="top:640px;height:37px">
<div class="cb" style="left:8px"></div>
<div class="c lk" style="left:57px"><svg class="chv" width="9" height="9" viewBox="0 0 9 9"><path d="M0.4 1.2L4.5 4.6 8.6 1.2M0.4 4.6L4.5 8 8.6 4.6" fill="none" stroke="#3c8dbc" stroke-width="1.05"/></svg><span class="t" style="margin-left:1px">0</span></div>
<div class="c lk" style="left:120px"><svg class="chv" width="9" height="9" viewBox="0 0 9 9"><path d="M0.4 1.2L4.5 4.6 8.6 1.2M0.4 4.6L4.5 8 8.6 4.6" fill="none" stroke="#3c8dbc" stroke-width="1.05"/></svg><span class="t" style="margin-left:1px">0x2c9850cB5e8920290ef6e4Cbac5ca1F775CCa5A1</span></div>
<div class="c lk" style="left:563px"><svg class="chv" width="9" height="9" viewBox="0 0 9 9"><path d="M0.4 1.2L4.5 4.6 8.6 1.2M0.4 4.6L4.5 8 8.6 4.6" fill="none" stroke="#3c8dbc" stroke-width="1.05"/></svg><span class="t">0.00000000</span></div>
<div class="c" style="left:691px">0</div>
<div class="c gr" style="left:810px">正常</div>
<div class="c gr" style="left:906px">正常</div>
<div class="c lk" style="left:1002px"><svg class="chv" width="9" height="9" viewBox="0 0 9 9"><path d="M0.4 1.2L4.5 4.6 8.6 1.2M0.4 4.6L4.5 8 8.6 4.6" fill="none" stroke="#3c8dbc" stroke-width="1.05"/></svg><span class="t">0</span></div>
<div class="c" style="left:1097px"><svg class="pen" width="12.5" height="12.5" viewBox="0 0 13 13"><path d="M0.3 12.7L0.9 9.3L9.7 0.5Q10.5-0.2 11.3 0.5L12.5 1.7Q13.2 2.5 12.5 3.3L3.7 12.1Z" fill="#3c8dbc"/><path d="M8.6 1.6L11.4 4.4M1.2 10.2L2.8 11.8" stroke="#f5f5f5" stroke-width="0.6"/></svg></div>
<div class="c" style="left:1192px"><span class="zh">获取</span>ip<span class="zh">失败</span></div>
<div class="c" style="left:1303px">2022-11-11 21:01:19</div>
<div class="c" style="left:1478px">434195<span class="zh">分钟</span></div>
<div class="c dots" style="left:1602px"><i></i><i></i><i></i></div>
</div>
<div class="row" style="top:677px;height:38px">
<div class="cb" style="left:8px"></div>
<div class="c lk" style="left:57px"><svg class="chv" width="9" height="9" viewBox="0 0 9 9"><path d="M0.4 1.2L4.5 4.6 8.6 1.2M0.4 4.6L4.5 8 8.6 4.6" fill="none" stroke="#3c8dbc" stroke-width="1.05"/></svg><span class="t" style="margin-left:1px">0</span></div>
<div class="c lk" style="left:120px"><svg class="chv" width="9" height="9" viewBox="0 0 9 9"><path d="M0.4 1.2L4.5 4.6 8.6 1.2M0.4 4.6L4.5 8 8.6 4.6" fill="none" stroke="#3c8dbc" stroke-width="1.05"/></svg><span class="t" style="margin-left:1px">0xADDBb6DdaD560f6b0b1C8c062F306Ee61770Ba9e</span></div>
<div class="c lk" style="left:563px"><svg class="chv" width="9" height="9" viewBox="0 0 9 9"><path d="M0.4 1.2L4.5 4.6 8.6 1.2M0.4 4.6L4.5 8 8.6 4.6" fill="none" stroke="#3c8dbc" stroke-width="1.05"/></svg><span class="t">0.00000000</span></div>
<div class="c" style="left:691px">0</div>
<div class="c gr" style="left:810px">正常</div>
<div class="c gr" style="left:906px">正常</div>
<div class="c lk" style="left:1002px"><svg class="chv" width="9" height="9" viewBox="0 0 9 9"><path d="M0.4 1.2L4.5 4.6 8.6 1.2M0.4 4.6L4.5 8 8.6 4.6" fill="none" stroke="#3c8dbc" stroke-width="1.05"/></svg><span class="t">0</span></div>
<div class="c" style="left:1097px"><svg class="pen" width="12.5" height="12.5" viewBox="0 0 13 13"><path d="M0.3 12.7L0.9 9.3L9.7 0.5Q10.5-0.2 11.3 0.5L12.5 1.7Q13.2 2.5 12.5 3.3L3.7 12.1Z" fill="#3c8dbc"/><path d="M8.6 1.6L11.4 4.4M1.2 10.2L2.8 11.8" stroke="#f5f5f5" stroke-width="0.6"/></svg></div>
<div class="c" style="left:1192px"><span class="zh">获取</span>ip<span class="zh">失败</span></div>
<div class="c" style="left:1303px">2022-11-11 21:00:43</div>
<div class="c" style="left:1478px">425946<span class="zh">分钟</span></div>
<div class="c dots" style="left:1602px"><i></i><i></i><i></i></div>
</div>
<div class="row" style="top:715px;height:38px">
<div class="cb" style="left:8px"></div>
<div class="c lk" style="left:57px"><svg class="chv" width="9" height="9" viewBox="0 0 9 9"><path d="M0.4 1.2L4.5 4.6 8.6 1.2M0.4 4.6L4.5 8 8.6 4.6" fill="none" stroke="#3c8dbc" stroke-width="1.05"/></svg><span class="t" style="margin-left:1px">0</span></div>
<div class="c lk" style="left:120px"><svg class="chv" width="9" height="9" viewBox="0 0 9 9"><path d="M0.4 1.2L4.5 4.6 8.6 1.2M0.4 4.6L4.5 8 8.6 4.6" fill="none" stroke="#3c8dbc" stroke-width="1.05"/></svg><span class="t" style="margin-left:1px">0xd84C9101E2a6D7e7b49023eD58285C81D882476A</span></div>
<div class="c lk" style="left:563px"><svg class="chv" width="9" height="9" viewBox="0 0 9 9"><path d="M0.4 1.2L4.5 4.6 8.6 1.2M0.4 4.6L4.5 8 8.6 4.6" fill="none" stroke="#3c8dbc" stroke-width="1.05"/></svg><span class="t">0.00000000</span></div>
<div class="c" style="left:691px">0</div>
<div class="c gr" style="left:810px">正常</div>
<div class="c gr" style="left:906px">正常</div>
<div class="c lk" style="left:1002px"><svg class="chv" width="9" height="9" viewBox="0 0 9 9"><path d="M0.4 1.2L4.5 4.6 8.6 1.2M0.4 4.6L4.5 8 8.6 4.6" fill="none" stroke="#3c8dbc" stroke-width="1.05"/></svg><span class="t">0</span></div>
<div class="c" style="left:1097px"><svg class="pen" width="12.5" height="12.5" viewBox="0 0 13 13"><path d="M0.3 12.7L0.9 9.3L9.7 0.5Q10.5-0.2 11.3 0.5L12.5 1.7Q13.2 2.5 12.5 3.3L3.7 12.1Z" fill="#3c8dbc"/><path d="M8.6 1.6L11.4 4.4M1.2 10.2L2.8 11.8" stroke="#f5f5f5" stroke-width="0.6"/></svg></div>
<div class="c" style="left:1192px"><span class="zh">获取</span>ip<span class="zh">失败</span></div>
<div class="c" style="left:1303px">2022-11-11 19:22:34</div>
<div class="c" style="left:1478px">425881<span class="zh">分钟</span></div>
<div class="c dots" style="left:1602px"><i></i><i></i><i></i></div>
</div>
<div class="row" style="top:753px;height:37px">
<div class="cb" style="left:8px"></div>
<div class="c lk" style="left:57px"><svg class="chv" width="9" height="9" viewBox="0 0 9 9"><path d="M0.4 1.2L4.5 4.6 8.6 1.2M0.4 4.6L4.5 8 8.6 4.6" fill="none" stroke="#3c8dbc" stroke-width="1.05"/></svg><span class="t" style="margin-left:1px">0</span></div>
<div class="c lk" style="left:120px"><svg class="chv" width="9" height="9" viewBox="0 0 9 9"><path d="M0.4 1.2L4.5 4.6 8.6 1.2M0.4 4.6L4.5 8 8.6 4.6" fill="none" stroke="#3c8dbc" stroke-width="1.05"/></svg><span class="t" style="margin-left:1px">0x62D962294Cd996999A661B22F1c69D727b171af0</span></div>
<div class="c lk" style="left:563px"><svg class="chv" width="9" height="9" viewBox="0 0 9 9"><path d="M0.4 1.2L4.5 4.6 8.6 1.2M0.4 4.6L4.5 8 8.6 4.6" fill="none" stroke="#3c8dbc" stroke-width="1.05"/></svg><span class="t">0.00000000</span></div>
<div class="c" style="left:691px">0</div>
<div class="c gr" style="left:810px">正常</div>
<div class="c gr" style="left:906px">正常</div>
<div class="c lk" style="left:1002px"><svg class="chv" width="9" height="9" viewBox="0 0 9 9"><path d="M0.4 1.2L4.5 4.6 8.6 1.2M0.4 4.6L4.5 8 8.6 4.6" fill="none" stroke="#3c8dbc" stroke-width="1.05"/></svg><span class="t">0</span></div>
<div class="c" style="left:1097px"><svg class="pen" width="12.5" height="12.5" viewBox="0 0 13 13"><path d="M0.3 12.7L0.9 9.3L9.7 0.5Q10.5-0.2 11.3 0.5L12.5 1.7Q13.2 2.5 12.5 3.3L3.7 12.1Z" fill="#3c8dbc"/><path d="M8.6 1.6L11.4 4.4M1.2 10.2L2.8 11.8" stroke="#f5f5f5" stroke-width="0.6"/></svg></div>
<div class="c" style="left:1192px"><span class="zh">获取</span>ip<span class="zh">失败</span></div>
<div class="c" style="left:1303px">2022-11-11 16:13:28</div>
<div class="c" style="left:1478px">434536<span class="zh">分钟</span></div>
<div class="c dots" style="left:1602px"><i></i><i></i><i></i></div>
</div>
<div class="row" style="top:790px;height:38px">
<div class="cb" style="left:8px"></div>
<div class="c lk" style="left:57px"><svg class="chv" width="9" height="9" viewBox="0 0 9 9"><path d="M0.4 1.2L4.5 4.6 8.6 1.2M0.4 4.6L4.5 8 8.6 4.6" fill="none" stroke="#3c8dbc" stroke-width="1.05"/></svg><span class="t" style="margin-left:1px">0</span></div>
<div class="c lk" style="left:120px"><svg class="chv" width="9" height="9" viewBox="0 0 9 9"><path d="M0.4 1.2L4.5 4.6 8.6 1.2M0.4 4.6L4.5 8 8.6 4.6" fill="none" stroke="#3c8dbc" stroke-width="1.05"/></svg><span class="t" style="margin-left:1px">0x4d7F1790644Af787933c9fF0e2cff9a9B4299Abb</span></div>
<div class="c lk" style="left:563px"><svg class="chv" width="9" height="9" viewBox="0 0 9 9"><path d="M0.4 1.2L4.5 4.6 8.6 1.2M0.4 4.6L4.5 8 8.6 4.6" fill="none" stroke="#3c8dbc" stroke-width="1.05"/></svg><span class="t">0.00000000</span></div>
<div class="c" style="left:691px">0</div>
<div class="c gr" style="left:810px">正常</div>
<div class="c gr" style="left:906px">正常</div>
<div class="c lk" style="left:1002px"><svg class="chv" width="9" height="9" viewBox="0 0 9 9"><path d="M0.4 1.2L4.5 4.6 8.6 1.2M0.4 4.6L4.5 8 8.6 4.6" fill="none" stroke="#3c8dbc" stroke-width="1.05"/></svg><span class="t">0</span></div>
<div class="c" style="left:1097px"><svg class="pen" width="12.5" height="12.5" viewBox="0 0 13 13"><path d="M0.3 12.7L0.9 9.3L9.7 0.5Q10.5-0.2 11.3 0.5L12.5 1.7Q13.2 2.5 12.5 3.3L3.7 12.1Z" fill="#3c8dbc"/><path d="M8.6 1.6L11.4 4.4M1.2 10.2L2.8 11.8" stroke="#f5f5f5" stroke-width="0.6"/></svg></div>
<div class="c" style="left:1192px"><span class="zh">获取</span>ip<span class="zh">失败</span></div>
<div class="c" style="left:1303px">2022-11-10 11:34:41</div>
<div class="c" style="left:1478px">429980<span class="zh">分钟</span></div>
<div class="c dots" style="left:1602px"><i></i><i></i><i></i></div>
</div>
<div class="row" style="top:828px;height:38px">
<div class="cb" style="left:8px"></div>
<div class="c lk" style="left:57px"><svg class="chv" width="9" height="9" viewBox="0 0 9 9"><path d="M0.4 1.2L4.5 4.6 8.6 1.2M0.4 4.6L4.5 8 8.6 4.6" fill="none" stroke="#3c8dbc" stroke-width="1.05"/></svg><span class="t" style="margin-left:1px">0</span></div>
<div class="c lk" style="left:120px"><svg class="chv" width="9" height="9" viewBox="0 0 9 9"><path d="M0.4 1.2L4.5 4.6 8.6 1.2M0.4 4.6L4.5 8 8.6 4.6" fill="none" stroke="#3c8dbc" stroke-width="1.05"/></svg><span class="t" style="margin-left:1px">0xc347e86265b8a6528efFBDC63d4637518264C991</span></div>
<div class="c lk" style="left:563px"><svg class="chv" width="9" height="9" viewBox="0 0 9 9"><path d="M0.4 1.2L4.5 4.6 8.6 1.2M0.4 4.6L4.5 8 8.6 4.6" fill="none" stroke="#3c8dbc" stroke-width="1.05"/></svg><span class="t">0.00000000</span></div>
<div class="c" style="left:691px">0</div>
<div class="c gr" style="left:810px">正常</div>
<div class="c gr" style="left:906px">正常</div>
<div class="c lk" style="left:1002px"><svg class="chv" width="9" height="9" viewBox="0 0 9 9"><path d="M0.4 1.2L4.5 4.6 8.6 1.2M0.4 4.6L4.5 8 8.6 4.6" fill="none" stroke="#3c8dbc" stroke-width="1.05"/></svg><span class="t">0</span></div>
<div class="c" style="left:1097px"><svg class="pen" width="12.5" height="12.5" viewBox="0 0 13 13"><path d="M0.3 12.7L0.9 9.3L9.7 0.5Q10.5-0.2 11.3 0.5L12.5 1.7Q13.2 2.5 12.5 3.3L3.7 12.1Z" fill="#3c8dbc"/><path d="M8.6 1.6L11.4 4.4M1.2 10.2L2.8 11.8" stroke="#f5f5f5" stroke-width="0.6"/></svg></div>
<div class="c" style="left:1192px"><span class="zh">获取</span>ip<span class="zh">失败</span></div>
<div class="c" style="left:1303px">2022-07-18 14:58:43</div>
<div class="c" style="left:1478px">433246<span class="zh">分钟</span></div>
<div class="c dots" style="left:1602px"><i></i><i></i><i></i></div>
</div>
<div class="row" style="top:866px;height:37px">
<div class="cb" style="left:8px"></div>
<div class="c lk" style="left:57px"><svg class="chv" width="9" height="9" viewBox="0 0 9 9"><path d="M0.4 1.2L4.5 4.6 8.6 1.2M0.4 4.6L4.5 8 8.6 4.6" fill="none" stroke="#3c8dbc" stroke-width="1.05"/></svg><span class="t" style="margin-left:1px">0</span></div>
<div class="c lk" style="left:120px"><svg class="chv" width="9" height="9" viewBox="0 0 9 9"><path d="M0.4 1.2L4.5 4.6 8.6 1.2M0.4 4.6L4.5 8 8.6 4.6" fill="none" stroke="#3c8dbc" stroke-width="1.05"/></svg><span class="t" style="margin-left:1px">0x22cf46567B0Cd0090F68F58Ce77ec00c0C37DE16</span></div>
<div class="c lk" style="left:563px"><svg class="chv" width="9" height="9" viewBox="0 0 9 9"><path d="M0.4 1.2L4.5 4.6 8.6 1.2M0.4 4.6L4.5 8 8.6 4.6" fill="none" stroke="#3c8dbc" stroke-width="1.05"/></svg><span class="t">0.00000000</span></div>
<div class="c" style="left:691px">0</div>
<div class="c gr" style="left:810px">正常</div>
<div class="c gr" style="left:906px">正常</div>
<div class="c lk" style="left:1002px"><svg class="chv" width="9" height="9" viewBox="0 0 9 9"><path d="M0.4 1.2L4.5 4.6 8.6 1.2M0.4 4.6L4.5 8 8.6 4.6" fill="none" stroke="#3c8dbc" stroke-width="1.05"/></svg><span class="t">0</span></div>
<div class="c" style="left:1097px"><svg class="pen" width="12.5" height="12.5" viewBox="0 0 13 13"><path d="M0.3 12.7L0.9 9.3L9.7 0.5Q10.5-0.2 11.3 0.5L12.5 1.7Q13.2 2.5 12.5 3.3L3.7 12.1Z" fill="#3c8dbc"/><path d="M8.6 1.6L11.4 4.4M1.2 10.2L2.8 11.8" stroke="#f5f5f5" stroke-width="0.6"/></svg></div>
<div class="c" style="left:1192px"><span class="zh">获取</span>ip<span class="zh">失败</span></div>
<div class="c" style="left:1303px">2022-07-14 17:26:53</div>
<div class="c" style="left:1478px">607268<span class="zh">分钟</span></div>
<div class="c dots" style="left:1602px"><i></i><i></i><i></i></div>
</div>
<div class="row" style="top:903px;height:38px">
<div class="cb" style="left:8px"></div>
<div class="c lk" style="left:57px"><svg class="chv" width="9" height="9" viewBox="0 0 9 9"><path d="M0.4 1.2L4.5 4.6 8.6 1.2M0.4 4.6L4.5 8 8.6 4.6" fill="none" stroke="#3c8dbc" stroke-width="1.05"/></svg><span class="t" style="margin-left:1px">0</span></div>
<div class="c lk" style="left:120px"><svg class="chv" width="9" height="9" viewBox="0 0 9 9"><path d="M0.4 1.2L4.5 4.6 8.6 1.2M0.4 4.6L4.5 8 8.6 4.6" fill="none" stroke="#3c8dbc" stroke-width="1.05"/></svg><span class="t" style="margin-left:1px">0x0000000000000000000000000000000000000000</span></div>
<div class="c lk" style="left:563px"><svg class="chv" width="9" height="9" viewBox="0 0 9 9"><path d="M0.4 1.2L4.5 4.6 8.6 1.2M0.4 4.6L4.5 8 8.6 4.6" fill="none" stroke="#3c8dbc" stroke-width="1.05"/></svg><span class="t">0.00000000</span></div>
<div class="c" style="left:691px">0</div>
<div class="c gr" style="left:810px">正常</div>
<div class="c gr" style="left:906px">正常</div>
<div class="c lk" style="left:1002px"><svg class="chv" width="9" height="9" viewBox="0 0 9 9"><path d="M0.4 1.2L4.5 4.6 8.6 1.2M0.4 4.6L4.5 8 8.6 4.6" fill="none" stroke="#3c8dbc" stroke-width="1.05"/></svg><span class="t">0</span></div>
<div class="c" style="left:1097px"><svg class="pen" width="12.5" height="12.5" viewBox="0 0 13 13"><path d="M0.3 12.7L0.9 9.3L9.7 0.5Q10.5-0.2 11.3 0.5L12.5 1.7Q13.2 2.5 12.5 3.3L3.7 12.1Z" fill="#3c8dbc"/><path d="M8.6 1.6L11.4 4.4M1.2 10.2L2.8 11.8" stroke="#f5f5f5" stroke-width="0.6"/></svg></div>
<div class="c" style="left:1192px"><span class="zh">获取</span>ip<span class="zh">失败</span></div>
<div class="c" style="left:1303px">2022-07-14 17:26:53</div>
<div class="c" style="left:1478px">607268<span class="zh">分钟</span></div>
<div class="c dots" style="left:1602px"><i></i><i></i><i></i></div>
</div>
</div>
<div id="menu">
<div class="it" style="left:20px;top:10px">编辑</div>
<div class="it" style="left:20px;top:36px">删除</div>
<div class="dv"></div>
<div class="it" style="left:20px;top:81px">更新余额</div>
<div class="it" style="left:20px;top:107px">发放空投</div>
<div class="it" style="left:20px;top:133px">划转余额</div>
</div>
<svg class="a" style="left:1438px;top:278px" width="310" height="50" viewBox="0 0 310 50"><g fill="#1570f2" stroke="#1570f2" stroke-linecap="round" stroke-linejoin="round">
<path d="M10 11Q17 12 16.5 15Q14 18 10 19.5Q13 15 10 11Z" stroke-width="1.0"/>
<path d="M8 24Q3 33 10 40" fill="none" stroke-width="9.1"/>
<path d="M10 37Q20 20 36 8" fill="none" stroke-width="1.6"/>
<path d="M34 14Q45 11 54 13" fill="none" stroke-width="6.5"/>
<path fill-rule="evenodd" stroke-width="1.5" d="M31 22L52 21L70 25Q66 30 62 35L58 39L31 41Q27 37 31 31ZM43 24L55 23.5L55 28L42 29ZM37 31L50 29.5L49 35L36 36Z"/>
<path d="M98 15Q102 17 99 20L87 28" fill="none" stroke-width="6.5"/>
<path d="M88 28Q97 24 105 25" fill="none" stroke-width="3.9"/>
<path d="M104 26Q101 37 84 42" fill="none" stroke-width="5.2"/>
<path d="M115 8Q117 25 113 43" fill="none" stroke-width="7.8"/>
<path d="M119 27Q132 29 145 31" fill="none" stroke-width="5.2"/>
<path d="M165 12Q172 14 172 16Q168 19 166 19.5Q168 16 165 12Z" stroke-width="1.0"/>
<path d="M157 23Q162 27 165 31" fill="none" stroke-width="3.9"/>
<path d="M173 25Q168 34 159 41" fill="none" stroke-width="6.5"/>
<path d="M181 11Q195 8 207 7" fill="none" stroke-width="5.2"/>
<path d="M186 12Q185 30 178 42" fill="none" stroke-width="6.5"/>
<path fill-rule="evenodd" stroke-width="1.5" d="M189 16L213 20L216 27L205 32L190 33ZM191 22L200 22L199 26L191 26Z"/>
<path d="M198 33Q210 36 219 40" fill="none" stroke-width="5.2"/>
<path d="M237 17Q247 14 257 15" fill="none" stroke-width="5.2"/>
<path d="M256 16Q245 30 229 40" fill="none" stroke-width="7.8"/>
<path d="M245 33L256 31L257 40" fill="none" stroke-width="5.2"/>
<path d="M271 11Q282 10 289 12" fill="none" stroke-width="5.2"/>
<path d="M289 13Q281 22 272 26" fill="none" stroke-width="5.2"/>
<path d="M269 15Q268 24 271 30" fill="none" stroke-width="6.5"/>
<path d="M263 37Q285 31 299 33Q298 42 284 44" fill="none" stroke-width="5.2"/>
</g></svg>
<div class="a" style="left:1470px;top:322px;font-size:25.5px;line-height:30px;font-weight:bold;color:#f00">www.haiwaiym.com</div>

<div id="sb"></div><div id="sbt"></div>
</body></html>
